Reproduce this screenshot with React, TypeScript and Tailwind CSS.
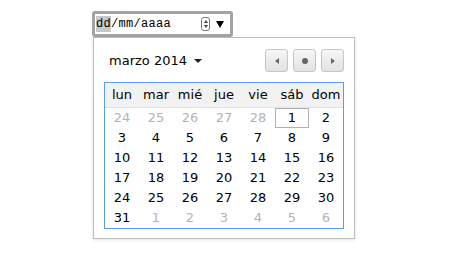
const lead = [24, 25, 26, 27, 28];
const days = Array.from({ length: 31 }, (_, i) => i + 1);
const trail = [1, 2, 3, 4, 5, 6];
const headers = ["lun", "mar", "mié", "jue", "vie", "sáb", "dom"];

function NavButton({ children }: { children: React.ReactNode }) {
  return (
    <button className="flex h-[23px] w-[23px] items-center justify-center rounded-[3px] border border-[#c6c6c6] bg-gradient-to-b from-[#f6f6f6] to-[#e2e2e2]">
      {children}
    </button>
  );
}

export default function App() {
  return (
    <div className="h-[259px] w-[467px] bg-white pl-[92px] pt-[11px] font-['DejaVu_Sans',sans-serif] text-black">
      {/* date input with focus ring */}
      <div className="flex h-[26px] w-[141px] items-center rounded-[3px] border-[3px] border-[#a3a3a3] bg-white pl-[1px] pr-[6px]">
        <div className="flex items-center font-['Liberation_Mono',monospace] text-[12px] leading-[16px] tracking-[0.3px]">
          <span className="bg-[#c8c8c8]">dd</span>
          <span>/mm/aaaa</span>
        </div>
        <div className="ml-auto flex h-[14px] w-[9px] flex-col items-center justify-center gap-[2px] rounded-[3px] border border-[#7a7a7a]">
          <div className="h-0 w-0 border-x-[2px] border-b-[3px] border-x-transparent border-b-[#444]" />
          <div className="h-0 w-0 border-x-[2px] border-t-[3px] border-x-transparent border-t-[#444]" />
        </div>
        <div className="ml-[6px] h-0 w-0 border-x-[4px] border-t-[7px] border-x-transparent border-t-black" />
      </div>

      {/* popup */}
      <div className="ml-px w-[262px] border border-[#bdbdbd] bg-white px-[10px] pb-[9px] pt-[11px] shadow-[0_1px_3px_rgba(0,0,0,0.12)]">
        <div className="flex items-center justify-between">
          <div className="flex items-center pl-[5px] text-[13px]">
            <span>marzo 2014</span>
            <div className="ml-[7px] h-0 w-0 border-x-[4px] border-t-[4px] border-x-transparent border-t-[#222]" />
          </div>
          <div className="flex gap-[5px]">
            <NavButton>
              <div className="h-0 w-0 border-y-[3px] border-r-[4px] border-y-transparent border-r-[#666]" />
            </NavButton>
            <NavButton>
              <div className="h-[6px] w-[6px] rounded-full bg-[#666]" />
            </NavButton>
            <NavButton>
              <div className="h-0 w-0 border-y-[3px] border-l-[4px] border-y-transparent border-l-[#666]" />
            </NavButton>
          </div>
        </div>

        <div className="mt-[10px] border border-[#5a9bf0] text-[13px]">
          <div className="grid h-[25px] grid-cols-7 items-center border-b border-[#e2e2e2] bg-[#f2f2f2]">
            {headers.map((h) => (
              <div key={h} className="text-center">
                {h}
              </div>
            ))}
          </div>
          <div className="grid grid-cols-7">
            {lead.map((d) => (
              <div key={"l" + d} className="flex h-[20px] items-center justify-center text-[#b3b3b3]">
                {d}
              </div>
            ))}
            {days.map((d) => (
              <div key={d} className="flex h-[20px] items-center justify-center">
                {d === 1 ? (
                  <span className="flex h-[20px] w-[34px] items-center justify-center border border-[#b0b0b0]">
                    1
                  </span>
                ) : (
                  d
                )}
              </div>
            ))}
            {trail.map((d) => (
              <div key={"t" + d} className="flex h-[20px] items-center justify-center text-[#b3b3b3]">
                {d}
              </div>
            ))}
          </div>
        </div>
      </div>
    </div>
  );
}
